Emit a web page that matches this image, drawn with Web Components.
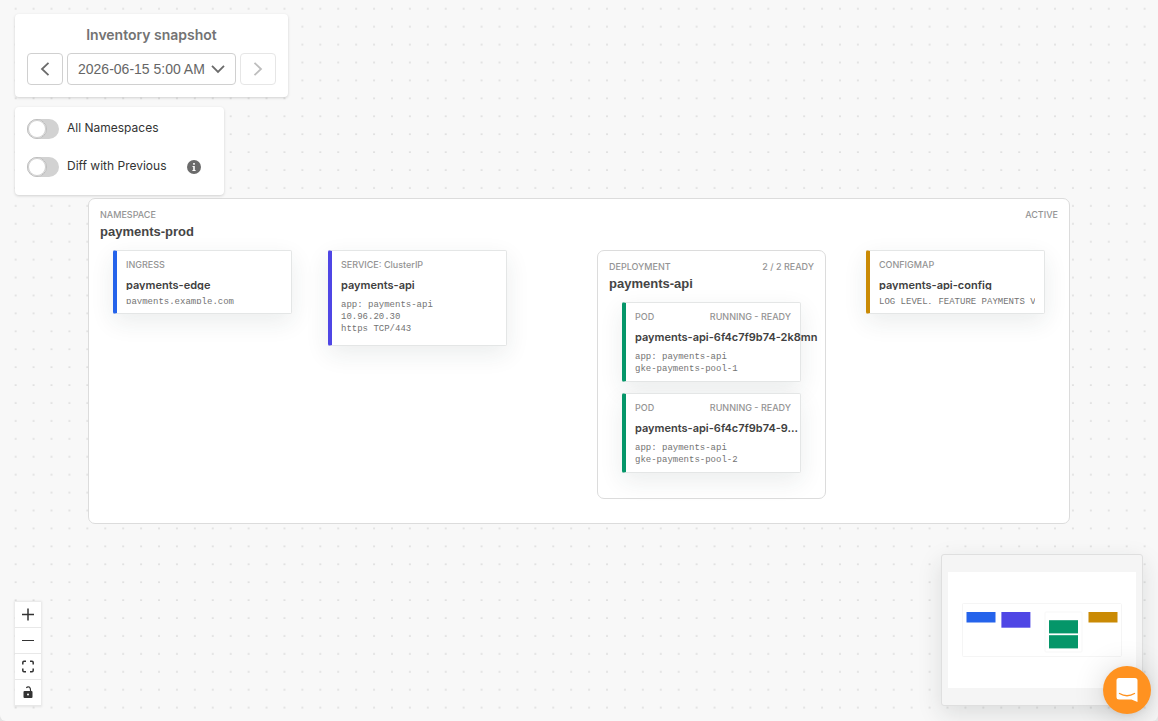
<!DOCTYPE html>
<html lang="en">
<head>
<meta charset="utf-8">
<meta name="viewport" content="width=device-width, initial-scale=1">
<title>Inventory snapshot</title>
<style>
  html, body { height: 100%; margin: 0; }
  body { background: #e4e4e4; font-family: Inter, "Liberation Sans", sans-serif; color: #404040; }
</style>
</head>
<body>
<inventory-app></inventory-app>
<script>
const define = (name, html, setup) => {
  const template = document.createElement('template');
  template.innerHTML = html;
  customElements.define(name, class extends HTMLElement {
    constructor() {
      super();
      this.attachShadow({ mode: 'open' }).append(template.content.cloneNode(true));
    }
    connectedCallback() { if (setup) setup(this, this.shadowRoot); }
  });
};

/* White floating card */
define('float-panel', `
  <style>
    :host { display: block; box-sizing: border-box; background: #fff; border-radius: 4px; padding: 12px;
      box-shadow: 0 1px 3px rgba(0,0,0,.16); }
  </style>
  <slot></slot>`);

define('snapshot-picker', `
  <style>
    :host { display: block; width: max-content; }
    h2 { margin: 0 0 9px; font-size: 14px; line-height: 18px; font-weight: 600; color: #737373; text-align: center; }
    .row { display: flex; gap: 4px; }
    button, select { box-sizing: border-box; height: 32px; border: 1px solid #d0d0d0; border-radius: 4px; background: #fff; font: inherit; color: #737373; }
    button { width: 36px; padding: 0; display: grid; place-items: center; }
    button:disabled { border-color: #e6e6e6; color: #bdbdbd; }
    .field { display: grid; align-items: center; width: 169px; }
    select { grid-area: 1 / 1; width: 100%; appearance: none; padding: 0 26px 0 10px; font: 14px "Liberation Sans", sans-serif; color: #666; }
    .field svg { grid-area: 1 / 1; justify-self: end; margin-right: 11px; pointer-events: none; }
    svg { fill: none; stroke: currentColor; stroke-width: 1.8; color: #6b6b6b; }
    button:disabled svg { color: #bdbdbd; }
  </style>
  <float-panel>
    <h2>Inventory snapshot</h2>
    <div class="row">
      <button aria-label="Previous snapshot"><svg width="16" height="16"><path d="M11.500 1.800 5 8l6.500 6.200"/></svg></button>
      <div class="field">
        <select aria-label="Snapshot time"><option>2026-06-15 5:00 AM</option></select>
        <svg width="14" height="14"><path d="M1 3.800 7 10l6-6.200"/></svg>
      </div>
      <button disabled aria-label="Next snapshot"><svg width="16" height="16"><path d="M4.500 1.800 11 8l-6.500 6.200"/></svg></button>
    </div>
  </float-panel>`);

define('toggle-switch', `
  <style>
    :host { display: block; }
    label { display: flex; gap: 8px; font-size: 12px; line-height: 18px; color: #333; }
    input { appearance: none; margin: 0; width: 32px; height: 20px; border-radius: 10px; background: #d2d2d2; display: flex; }
    input::before { content: ""; box-sizing: border-box; width: 20px; height: 20px; border-radius: 50%; background: #fff; border: 1px solid #bdbdbd; box-shadow: inset 0 0 0 1px #d0d0d0; }
    input:checked { justify-content: flex-end; background: #737373; }
  </style>
  <label><input type="checkbox" role="switch"><slot></slot></label>`);

define('filter-panel', `
  <style>
    :host { display: block; width: 209px; }
    .rows { display: grid; gap: 18px; padding-bottom: 6px; }
    .row { display: flex; align-items: center; gap: 20px; }
    svg { display: block; }
  </style>
  <float-panel><div class="rows">
    <toggle-switch>All Namespaces</toggle-switch>
    <div class="row"><toggle-switch>Diff with Previous</toggle-switch>
      <svg width="14" height="14" role="img" aria-label="Information"><circle cx="7" cy="7" r="7" fill="#6b6b6b"/><path d="M6.200 3h1.600v1.700H6.200zM5.500 6H7.800v4h.8v1H5.400v-1h.8V7h-.7z" fill="#fff"/></svg>
    </div>
  </div></float-panel>`);

/* Bordered group that holds nodes */
define('flow-group', `
  <style>
    :host { display: block; box-sizing: border-box; background: #fff; border: 1px solid #dcdcdc; border-radius: 7px; padding: 10px 11px; }
    .head { display: flex; justify-content: space-between; font-size: 9px; line-height: 12px; font-weight: 500; color: #949494; }
    h3 { margin: 3px 0 0; font: 700 13px/16px "Liberation Sans", sans-serif; color: #454545; }
  </style>
  <div class="head"><span class="kind"></span><span class="status"></span></div>
  <h3></h3>
  <slot></slot>`, (el, root) => {
    root.querySelector('.kind').textContent = el.getAttribute('kind');
    root.querySelector('.status').textContent = el.getAttribute('status') || '';
    root.querySelector('h3').textContent = el.getAttribute('name');
});

define('flow-node', `
  <style>
    :host { display: block; box-sizing: border-box; width: 179px; background: #fff; border: 1px solid #e4e6e6;
      border-left: 4px solid var(--accent); border-radius: 2px; padding: 8px 9px;
      box-shadow: 0 8px 24px rgba(30,50,50,.09); }
    .head { display: flex; justify-content: space-between; font-size: 9px; line-height: 12px; font-weight: 500; color: #949494; }
    h4 { margin: 7px 0 0; font-size: 11px; line-height: 14px; font-weight: 600; color: #404040; white-space: nowrap; }
    .body { margin-top: 7px; font: 9px/12px "Liberation Mono", monospace; color: #737373; white-space: pre; }
    :host([compact]) h4 { height: 12px; overflow: hidden; }
    :host([compact]) .body { margin-top: 6px; height: 8px; overflow: hidden; }
  </style>
  <div class="head"><span class="kind"></span><span class="status"></span></div>
  <h4></h4>
  <div class="body"><slot></slot></div>`, (el, root) => {
    root.querySelector('.kind').textContent = el.getAttribute('kind');
    root.querySelector('.status').textContent = el.getAttribute('status') || '';
    root.querySelector('h4').textContent = el.getAttribute('name');
});

/* Free canvas: every node has its own place */
define('flow-canvas', `
  <style>
    :host { display: grid; place-items: center; }
    .ns { position: relative; width: 982px; height: 326px; }
    .ns > *, .deploy > * { position: absolute; }
    .ingress { left: 24px; top: 51px; height: 64px; --accent: #2563eb; }
    .service { left: 239px; top: 51px; height: 96px; --accent: #4f46e5; }
    .deploy { left: 508px; top: 51px; width: 229px; height: 249px; }
    .config { left: 777px; top: 51px; height: 64px; --accent: #ca8a04; }
    .pod1 { left: 24px; top: 51px; height: 80px; --accent: #059669; }
    .pod2 { left: 24px; top: 142px; height: 80px; --accent: #059669; }
  </style>
  <flow-group class="ns" kind="NAMESPACE" name="payments-prod" status="ACTIVE">
    <flow-node class="ingress" compact kind="INGRESS" name="payments-edge">payments.example.com</flow-node>
    <flow-node class="service" kind="SERVICE: ClusterIP" name="payments-api">app: payments-api
10.96.20.30
https TCP/443</flow-node>
    <flow-group class="deploy" kind="DEPLOYMENT" name="payments-api" status="2 / 2 READY">
      <flow-node class="pod1" kind="POD" status="RUNNING - READY" name="payments-api-6f4c7f9b74-2k8mn">app: payments-api
gke-payments-pool-1</flow-node>
      <flow-node class="pod2" kind="POD" status="RUNNING - READY" name="payments-api-6f4c7f9b74-9…">app: payments-api
gke-payments-pool-2</flow-node>
    </flow-group>
    <flow-node class="config" compact kind="CONFIGMAP" name="payments-api-config">LOG_LEVEL, FEATURE_PAYMENTS_V</flow-node>
  </flow-group>`);

define('canvas-controls', `
  <style>
    :host { display: grid; width: 26px; gap: 1px; padding-bottom: 1px; background: #e8e8e8; box-shadow: 0 0 2px 1px rgba(0,0,0,.08); }
    button { width: 26px; height: 25px; padding: 0; border: 0; background: #fff; display: grid; place-items: center; color: #333; }
    svg { fill: none; stroke: currentColor; }
  </style>
  <button aria-label="Zoom in"><svg width="12" height="13" stroke-width="1.500"><path d="M6 .5v12M0 6.500h12"/></svg></button>
  <button aria-label="Zoom out"><svg width="12" height="13" stroke-width="1.200"><path d="M0 6.500h12"/></svg></button>
  <button aria-label="Fit view"><svg width="12" height="13" stroke-width="1.500"><path d="M.8 4.500V2.500Q.8 1.300 2 1.300h2M8 1.300h2q1.200 0 1.200 1.200v2M11.200 8.500v2q0 1.200-1.200 1.200H8M4 11.700H2Q.8 11.700.8 10.500v-2"/></svg></button>
  <button aria-label="Toggle interactivity"><svg width="12" height="13"><rect x="1.500" y="5" width="9" height="7" rx="1" fill="currentColor" stroke="none"/><circle cx="6" cy="8.500" r="1" fill="#fff" stroke="none"/><path d="M4.300 1.800Q5.500.3 7.300 1 8.600 1.700 8.600 5" stroke-width="1.200"/></svg></button>`);

define('mini-map', `
  <style>
    :host { display: block; box-sizing: border-box; width: 202px; height: 152px; background: #f5f5f5; border: 1px solid #dfdfdf; border-radius: 3px; box-shadow: 0 8px 24px rgba(30,40,40,.13); }
    svg { display: block; }
  </style>
  <svg width="200" height="150" role="img" aria-label="Mini map">
    <rect x="6" y="17" width="188" height="116" fill="#fff"/>
    <rect x="20.500" y="48.500" width="159" height="53" rx="1" fill="none" stroke="#f5f5f5"/>
    <rect x="103" y="57" width="37" height="40" rx="1" fill="none" stroke="#f7f7f7"/>
    <rect x="24.500" y="57" width="29" height="10.500" fill="#2563eb"/>
    <rect x="59.400" y="57" width="29" height="15.700" fill="#4f46e5"/>
    <rect x="107" y="65.200" width="29" height="13.200" fill="#059669"/>
    <rect x="107" y="80.200" width="29" height="13.200" fill="#059669"/>
    <rect x="146.500" y="57" width="29" height="10.500" fill="#ca8a04"/>
  </svg>`);

define('chat-launcher', `
  <style>
    :host { display: block; }
    button { display: grid; place-items: center; width: 48px; height: 48px; padding: 0; border: 0; border-radius: 50%; background: #ff9220; box-shadow: 0 2px 32px rgba(0,0,0,.16), 0 1px 6px rgba(0,0,0,.06); }
  </style>
  <button aria-label="Open chat"><svg width="24" height="26"><path d="M4 1h16q2.500 0 2.500 2.500V25l-6-2.500H4q-2.500 0-2.500-2.500V3.500Q1.500 1 4 1z" fill="#fff"/><path d="M4.500 16.500q7.500 4.500 15 0" fill="none" stroke="#ff9220" stroke-width="1.300" stroke-linecap="round"/></svg></button>`);

define('inventory-app', `
  <style>
    :host { display: grid; min-height: 100vh; background: #f8f8f8; border-radius: 0 0 6px 6px; overflow: hidden; }
    .dots { position: absolute; width: 100%; height: 100%; }
    .dots, flow-canvas, .panels, canvas-controls, mini-map, chat-launcher { grid-area: 1 / 1; }
    flow-canvas { position: relative; }
    .panels { position: relative; align-self: start; justify-self: start; display: grid; gap: 10px; margin: 14px 0 0 15px; }
    canvas-controls { position: relative; place-self: end start; margin: 0 0 15px 15px; }
    mini-map { position: relative; place-self: end; margin: 0 15px 15px 0; }
    chat-launcher { position: relative; place-self: end; margin: 0 7px 7px 0; }
  </style>
  <svg class="dots" aria-hidden="true">
    <defs><pattern id="dot" x="6.700" y="-.300" width="17.920" height="17.920" patternUnits="userSpaceOnUse"><circle cx="8.960" cy="8.960" r=".55" fill="#9a9a9a"/></pattern></defs>
    <rect width="100%" height="100%" fill="url(#dot)"/>
  </svg>
  <flow-canvas></flow-canvas>
  <div class="panels"><snapshot-picker></snapshot-picker><filter-panel></filter-panel></div>
  <canvas-controls></canvas-controls>
  <mini-map></mini-map>
  <chat-launcher></chat-launcher>`);
</script>
</body>
</html>
